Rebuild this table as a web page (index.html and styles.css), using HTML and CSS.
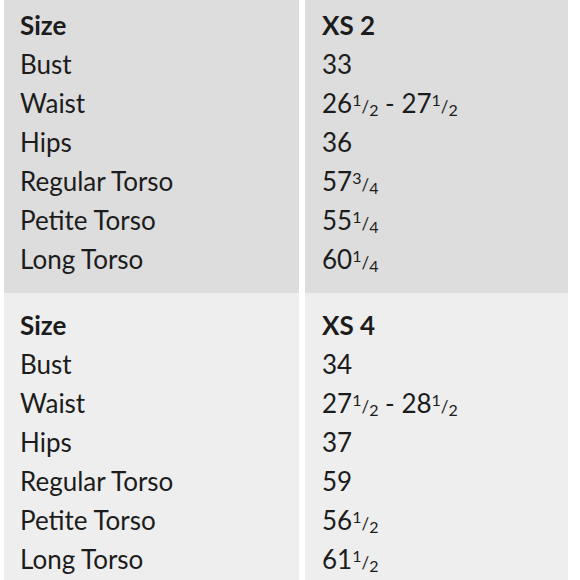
FILE: index.html
```html
<!DOCTYPE html>
<html>
<head>
<meta charset="utf-8">
<link rel="stylesheet" href="styles.css">
</head>
<body>
<div class="chart">
  <section class="block block--dark block--first">
    <div class="col col--label">
      <div class="cell cell--head">Size</div>
      <div class="cell">Bust</div>
      <div class="cell">Waist</div>
      <div class="cell">Hips</div>
      <div class="cell">Regular Torso</div>
      <div class="cell">Petite Torso</div>
      <div class="cell">Long Torso</div>
    </div>
    <div class="col col--value">
      <div class="cell cell--head">XS 2</div>
      <div class="cell">33</div>
      <div class="cell">26<span class="frac"><sup>1</sup>/<sub>2</sub></span> - 27<span class="frac"><sup>1</sup>/<sub>2</sub></span></div>
      <div class="cell">36</div>
      <div class="cell">57<span class="frac"><sup>3</sup>/<sub>4</sub></span></div>
      <div class="cell">55<span class="frac"><sup>1</sup>/<sub>4</sub></span></div>
      <div class="cell">60<span class="frac"><sup>1</sup>/<sub>4</sub></span></div>
    </div>
  </section>
  <section class="block block--light">
    <div class="col col--label">
      <div class="cell cell--head">Size</div>
      <div class="cell">Bust</div>
      <div class="cell">Waist</div>
      <div class="cell">Hips</div>
      <div class="cell">Regular Torso</div>
      <div class="cell">Petite Torso</div>
      <div class="cell">Long Torso</div>
    </div>
    <div class="col col--value">
      <div class="cell cell--head">XS 4</div>
      <div class="cell">34</div>
      <div class="cell">27<span class="frac"><sup>1</sup>/<sub>2</sub></span> - 28<span class="frac"><sup>1</sup>/<sub>2</sub></span></div>
      <div class="cell">37</div>
      <div class="cell">59</div>
      <div class="cell">56<span class="frac"><sup>1</sup>/<sub>2</sub></span></div>
      <div class="cell">61<span class="frac"><sup>1</sup>/<sub>2</sub></span></div>
    </div>
  </section>
</div>
</body>
</html>
```

FILE: styles.css
```css
html, body {
  margin: 0;
  padding: 0;
  background: #ffffff;
  overflow: hidden;
}

.chart {
  display: flex;
  flex-direction: column;
  padding: 0 12px 0 4px;
  font-family: Lato, "Liberation Sans", sans-serif;
  font-size: 26px;
  color: #1c1c1c;
}

.block {
  display: grid;
  grid-template-columns: 295px 1fr;
  column-gap: 6px;
  height: 300px;
  box-sizing: border-box;
}

.block--first {
  height: 293px;
}

.col {
  display: flex;
  flex-direction: column;
  padding: 13px 16px 13px 16px;
}

.block--first .col {
  padding-top: 6px;
}

.col--value {
  padding-left: 17px;
}

.block--dark .col {
  background: #dddddd;
}

.block--light .col {
  background: #eeeeee;
}

.cell {
  height: 39px;
  line-height: 39px;
  white-space: nowrap;
}

.cell--head {
  font-weight: 700;
}

.frac {
  font-size: 17px;
  line-height: 0;
}

.frac sup,
.frac sub {
  font-size: 16px;
  line-height: 0;
  position: relative;
  vertical-align: baseline;
}

.frac sup {
  top: -7px;
}

.frac sub {
  top: 3px;
}
```
